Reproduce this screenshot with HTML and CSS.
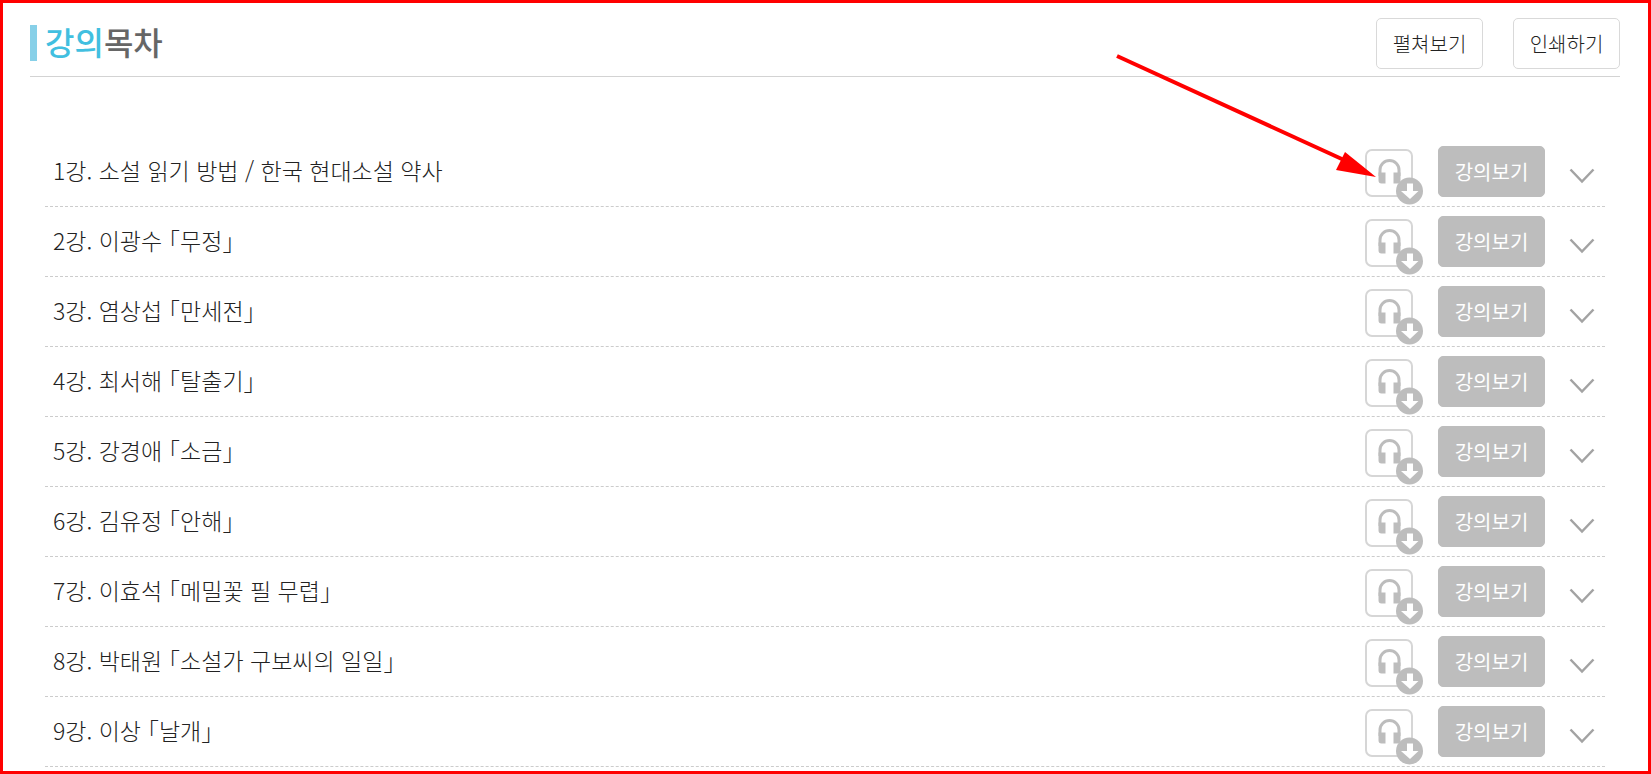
FILE: index.html
```
<!DOCTYPE html>
<html lang="ko">

<head>
  <meta charset="UTF-8" />
  <meta name="viewport" content="width=device-width, initial-scale=1.0" />
  <title>강의목차</title>
  <link rel="stylesheet" href="styles.css">
</head>

<body>
  <!-- 아이콘 모음 -->
  <svg class="sprite" aria-hidden="true">
    <symbol id="ico-audio" viewBox="0 0 58 60">
      <rect x="1" y="4" width="46" height="46" rx="6" fill="#fff" stroke="#d6d6d6" stroke-width="2" />
      <path d="M15 30V24a9.5 9.500 0 0 1 19 0v6" fill="none" stroke="#bdbdbd" stroke-width="3" />
      <path d="M13.500 26.500H20.500V37.500H16.500a3 3 0 0 1-3-3zM28.500 26.500H35.500V34.500a3 3 0 0 1-3 3H28.500z" fill="#bdbdbd" />
      <circle cx="44.500" cy="45" r="13.500" fill="#bdbdbd" />
      <path d="M42 37.500h6v7.500h5.500L45 53l-9-8h6z" fill="#fff" />
    </symbol>
    <symbol id="ico-down" viewBox="0 0 26 16">
      <path d="M1.500 1.500L13 13.500L24.500 1.500" fill="none" stroke="#a3a3a3" stroke-width="2.500" />
    </symbol>
  </svg>

  <div class="frame">
    <div class="header">
      <h1 class="title"><span>강의</span>목차</h1>
      <div class="tools">
        <button type="button" class="btn">펼쳐보기</button>
        <button type="button" class="btn">인쇄하기</button>
      </div>
    </div>

    <!-- 강의 목록 -->
    <ul class="list">
      <li>
        <span class="name">1강. 소설 읽기 방법 / 한국 현대소설 약사</span>
        <button type="button" class="audio" aria-label="음성 다운로드"><svg><use href="#ico-audio" /></svg></button>
        <button type="button" class="btn view">강의보기</button>
        <button type="button" class="more" aria-label="펼치기"><svg><use href="#ico-down" /></svg></button>
      </li>
      <li>
        <span class="name">2강. 이광수 ｢무정｣</span>
        <button type="button" class="audio" aria-label="음성 다운로드"><svg><use href="#ico-audio" /></svg></button>
        <button type="button" class="btn view">강의보기</button>
        <button type="button" class="more" aria-label="펼치기"><svg><use href="#ico-down" /></svg></button>
      </li>
      <li>
        <span class="name">3강. 염상섭 ｢만세전｣</span>
        <button type="button" class="audio" aria-label="음성 다운로드"><svg><use href="#ico-audio" /></svg></button>
        <button type="button" class="btn view">강의보기</button>
        <button type="button" class="more" aria-label="펼치기"><svg><use href="#ico-down" /></svg></button>
      </li>
      <li>
        <span class="name">4강. 최서해 ｢탈출기｣</span>
        <button type="button" class="audio" aria-label="음성 다운로드"><svg><use href="#ico-audio" /></svg></button>
        <button type="button" class="btn view">강의보기</button>
        <button type="button" class="more" aria-label="펼치기"><svg><use href="#ico-down" /></svg></button>
      </li>
      <li>
        <span class="name">5강. 강경애 ｢소금｣</span>
        <button type="button" class="audio" aria-label="음성 다운로드"><svg><use href="#ico-audio" /></svg></button>
        <button type="button" class="btn view">강의보기</button>
        <button type="button" class="more" aria-label="펼치기"><svg><use href="#ico-down" /></svg></button>
      </li>
      <li>
        <span class="name">6강. 김유정 ｢안해｣</span>
        <button type="button" class="audio" aria-label="음성 다운로드"><svg><use href="#ico-audio" /></svg></button>
        <button type="button" class="btn view">강의보기</button>
        <button type="button" class="more" aria-label="펼치기"><svg><use href="#ico-down" /></svg></button>
      </li>
      <li>
        <span class="name">7강. 이효석 ｢메밀꽃 필 무렵｣</span>
        <button type="button" class="audio" aria-label="음성 다운로드"><svg><use href="#ico-audio" /></svg></button>
        <button type="button" class="btn view">강의보기</button>
        <button type="button" class="more" aria-label="펼치기"><svg><use href="#ico-down" /></svg></button>
      </li>
      <li>
        <span class="name">8강. 박태원 ｢소설가 구보씨의 일일｣</span>
        <button type="button" class="audio" aria-label="음성 다운로드"><svg><use href="#ico-audio" /></svg></button>
        <button type="button" class="btn view">강의보기</button>
        <button type="button" class="more" aria-label="펼치기"><svg><use href="#ico-down" /></svg></button>
      </li>
      <li>
        <span class="name">9강. 이상 ｢날개｣</span>
        <button type="button" class="audio" aria-label="음성 다운로드"><svg><use href="#ico-audio" /></svg></button>
        <button type="button" class="btn view">강의보기</button>
        <button type="button" class="more" aria-label="펼치기"><svg><use href="#ico-down" /></svg></button>
      </li>
    </ul>

    <!-- 다운로드 버튼을 가리키는 화살표 -->
    <svg class="arrow" viewBox="0 0 260 124" aria-hidden="true">
      <path d="M1 3L228 107" stroke="#f00" stroke-width="4" />
      <path d="M229 99L220 117L260 124z" fill="#f00" />
    </svg>
  </div>
</body>

</html>
```
FILE: styles.css
```
* {
  margin: 0;
  padding: 0;
  box-sizing: border-box;
}

body {
  font-family: "Noto Sans CJK KR", sans-serif;
  font-weight: 300;
  color: #222;
  background: #fff;
}

ul {
  list-style: none;
}

button {
  border: none;
  background: none;
  font: inherit;
  color: inherit;
  cursor: pointer;
}

.sprite {
  position: absolute;
  width: 0;
  height: 0;
}

.frame {
  position: relative;
  min-height: 100vh;
  padding: 15px 28px 4px 27px;
  border: 3px solid #f00;
}

/* 상단 제목 */
.header {
  display: flex;
  justify-content: space-between;
  align-items: flex-start;
  padding-bottom: 7px;
  border-bottom: 1px solid #d3d3d3;
}

.title {
  height: 36px;
  margin-top: 7px;
  padding-left: 8px;
  border-left: 7px solid #87d0e8;
  font-size: 32px;
  font-weight: 500;
  line-height: 32px;
  color: #666;
}

.title span {
  color: #41bfe0;
}

.tools {
  display: flex;
  gap: 30px;
}

.btn {
  width: 107px;
  height: 51px;
  border: 1px solid #d9d9d9;
  border-radius: 5px;
  font-size: 20px;
  line-height: 28px;
}

/* 목록 */
.list {
  margin: 60px 15px 0;
}

.list li {
  display: flex;
  align-items: flex-start;
  height: 70px;
  padding: 9px 10px 0 8px;
  border-bottom: 1px dashed #ccc;
}

.name {
  flex: 1;
  font-size: 23px;
  line-height: 48px;
}

.view {
  margin: 0 24px 0 15px;
  border-color: #bdbdbd;
  background: #bdbdbd;
  font-weight: 400;
  color: #fff;
}

.audio,
.more {
  display: flex;
  align-items: center;
  height: 60px;
}

.audio svg {
  width: 58px;
  height: 60px;
}

.more svg {
  width: 26px;
  height: 16px;
}

.arrow {
  position: absolute;
  top: 50px;
  right: 272px;
  width: 260px;
  height: 124px;
}
```
